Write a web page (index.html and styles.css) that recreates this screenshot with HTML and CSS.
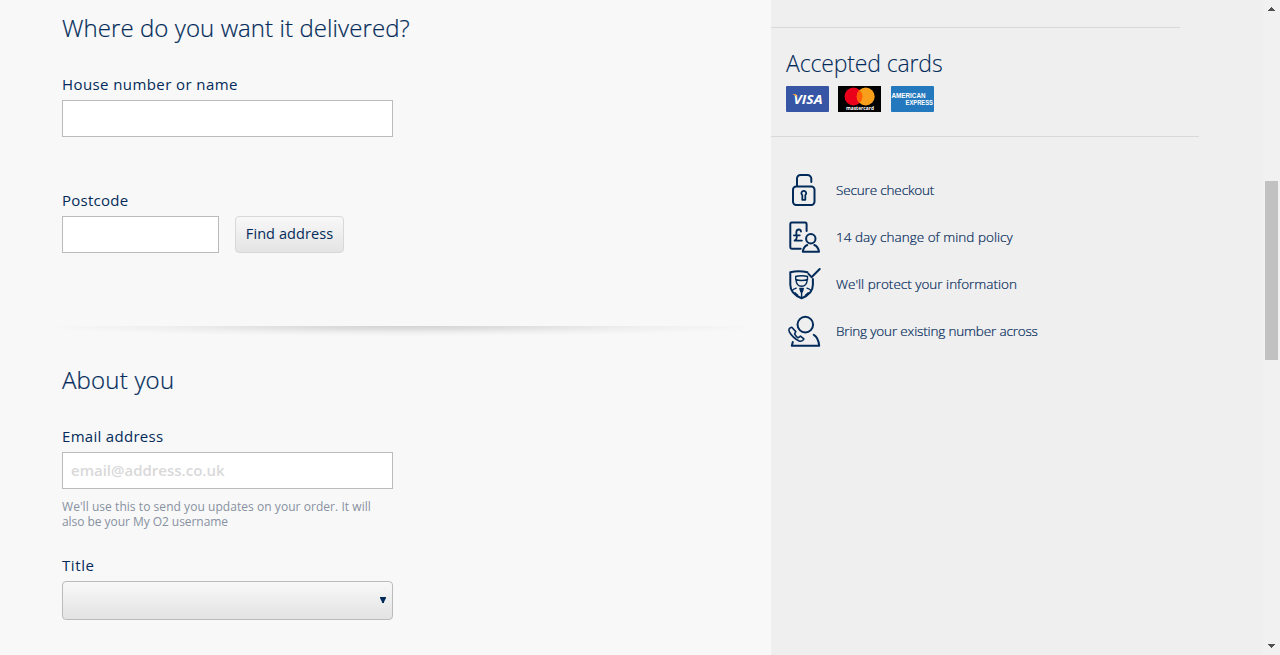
FILE: index.html
```html
<!DOCTYPE html>
<html lang="en">
<head>
<meta charset="utf-8">
<title>Delivery details</title>
<link rel="stylesheet" href="styles.css">
</head>
<body>
<div class="page">
  <main class="form">
    <h2 class="heading heading-delivery">Where do you want it delivered?</h2>
    <label class="label label-house" for="house">House number or name</label>
    <input class="field" id="house" type="text">
    <label class="label label-spaced label-postcode" for="postcode">Postcode</label>
    <div class="row">
      <input class="field field-short" id="postcode" type="text">
      <button class="button" type="button">Find address</button>
    </div>
    <div class="divider"></div>
    <h2 class="heading heading-about">About you</h2>
    <label class="label label-email" for="email">Email address</label>
    <input class="field" id="email" type="email" placeholder="email@address.co.uk">
    <p class="help"><span class="help-first">We'll use this to send you updates on your order. It will</span><br><span class="help-second">also be your My O2 username</span></p>
    <label class="label label-title">Title</label>
    <div class="select">
      <svg width="6" height="6" viewBox="0 0 6 6"><path d="M0 0h6v1L4 5v1H2V5L0 1z" fill="#032b5a"/></svg>
    </div>
  </main>
  <aside class="side">
    <div class="rule rule-top"></div>
    <h3 class="side-heading">Accepted cards</h3>
    <div class="cards">
      <svg width="43" height="26" viewBox="0 0 43 26"><rect width="43" height="26" rx="1" fill="#3655a5"/><text x="7.500" y="18" class="visa" textLength="29" lengthAdjust="spacingAndGlyphs">VISA</text><path d="M5.800 8h4.200l1 4C9.900 9.900 8.400 8.700 5.800 8z" fill="#f7a12b"/></svg>
      <svg class="card-mc" width="43" height="26" viewBox="0 0 43 26"><rect width="43" height="26" fill="#000"/><circle cx="15.500" cy="10.500" r="9" fill="#eb001b"/><circle cx="27.700" cy="10.500" r="9" fill="#f79e1b"/><path d="M21.600 3.900a9 9 0 0 1 0 13.200a9 9 0 0 1 0-13.200z" fill="#ff5f00"/><text x="8" y="23.600" class="mc" textLength="28" lengthAdjust="spacingAndGlyphs">mastercard</text></svg>
      <svg class="card-amex" width="43" height="26" viewBox="0 0 43 26"><rect width="43" height="26" rx="1" fill="#2478bd"/><text x="0.500" y="12" class="amex" textLength="34" lengthAdjust="spacingAndGlyphs">AMERICAN</text><text x="14.500" y="18.800" class="amex" textLength="27.500" lengthAdjust="spacingAndGlyphs">EXPRESS</text></svg>
    </div>
    <div class="rule rule-wide"></div>
    <ul class="perks">
      <li class="perk">
        <svg class="icon" width="34" height="34" viewBox="0 0 34 34"><path d="M10 12.500V5.500a3.500 3.500 0 0 1 3.500-3.500h7a3.800 3.800 0 0 1 3.800 3.800V9"/><rect x="6" y="13.600" width="21.500" height="18.400" rx="3.200"/><path stroke-width="1.800" d="M15.300 22.100a2.400 2.400 0 1 1 3 0v4.700h-3z"/></svg>
        <span class="perk-text p1">Secure checkout</span>
      </li>
      <li class="perk">
        <svg class="icon" width="34" height="34" viewBox="0 0 34 34"><path d="M19.600 11V4a1.400 1.400 0 0 0-1.400-1.400H4.700A1.400 1.400 0 0 0 3.300 4v23.300a1.400 1.400 0 0 0 1.400 1.400h9"/><path stroke-width="1.800" d="M14 11.500c-.2-1.300-1-2-2.100-2-1.700 0-2.600 1.300-2.600 3.200 0 2.500.5 3 .5 4.500 0 1.700-.7 2.700-2.200 3.400h7.300M6.900 15.300h5.900"/><circle cx="23.800" cy="18.800" r="4.700"/><path d="M20.300 25c-2.800 1.100-3.900 3-4.500 6.700h16.200c-.6-3.700-1.900-5.600-4.700-6.700"/></svg>
        <span class="perk-text p2">14 day change of mind policy</span>
      </li>
      <li class="perk">
        <svg class="icon icon-shield" width="34" height="34" viewBox="0 0 34 34"><path d="M20.500 6.200c-6.300-1.500-11.300-1.500-17.200 0v12.500c0 6.700 4.500 10.800 11.300 13.500 6.900-2.700 11.300-6.800 11.300-13.500V13"/><path d="M21.500 7.800l3 3.400 8.200-8.200"/><g stroke-width="1.400"><path d="M8.700 10.500c2.500-1.100 9.300-1.100 11.800 0v3c-3.700 1.300-8.100 1.300-11.800 0zM9 14c.3 4.500 2.100 6.200 5.600 6.200s5.300-1.700 5.600-6.200M9.200 22.200c-1.900.6-3.300 1.300-4.300 2.500M20 22.200c1.900.6 3.300 1.300 4.300 2.500M8 26.700c.8.900 1.700 1.700 2.700 2.400M21.200 26.700c-.8.900-1.700 1.700-2.700 2.400M14.600 24.500v7"/><path d="M12.900 22.500h3.400l-1 3.300h-1.400z" fill="#032b5a"/></g></svg>
        <span class="perk-text p3">We'll protect your information</span>
      </li>
      <li class="perk">
        <svg class="icon" width="34" height="34" viewBox="0 0 34 34"><circle cx="18.300" cy="10.600" r="7.800"/><path d="M5.800 28l-1 3.700h27.400c-.6-5.700-1.900-9-5.400-10.900"/><path stroke-width="1.600" d="M4.800 13.200C2.200 13.800 1.200 15.600 2.400 18c2.300 4 5.500 6.900 9.800 9 2 .7 3.700-.1 4.700-2.100l-3.500-2.800-2.300 1.700c-1.500-1-2.700-2.400-3.500-4l1.200-2.200z"/></svg>
        <span class="perk-text p4">Bring your existing number across</span>
      </li>
    </ul>
  </aside>
  <div class="scrollbar">
    <svg width="7" height="4" viewBox="0 0 7 4"><path d="M3 0h1v1h1v1h1v1h1v1H0V3h1V2h1V1h1z" fill="#505050"/></svg>
    <div class="thumb"></div>
    <svg class="arrow-down" width="7" height="4" viewBox="0 0 7 4"><path d="M0 0h7v1H6v1H5v1H4v1H3V3H2V2H1V1H0z" fill="#505050"/></svg>
  </div>
</div>
</body>
</html>
```
FILE: styles.css
```css
* { box-sizing: border-box; }
body { margin: 0; font-family: "Open Sans", "Noto Sans", sans-serif; color: #032b5a; overflow: hidden; }
.page { display: flex; height: 655px; background: #efefef; }
.form { width: 771px; padding: 8px 0 0 62px; background: #f8f8f8; display: flex; flex-direction: column; align-items: flex-start; }
.heading { margin: 0; font-size: 24px; line-height: 40px; font-weight: 300; white-space: nowrap; -webkit-text-stroke: 0.2px #032b5a; }
.heading-delivery { letter-spacing: 0.08px; }
.heading-about { letter-spacing: 0.2px; }
.label { margin-top: 26px; font-size: 15px; line-height: 20px; white-space: nowrap; }
.label-house { letter-spacing: 0.41px; }
.label-postcode { letter-spacing: 0.25px; }
.label-email { letter-spacing: 0.3px; }
.label-title { letter-spacing: 0.6px; }
.label-spaced { margin-top: 53px; }
.field { margin: 6px 0 0; width: 331px; height: 37px; padding: 0 8px 2px; border: 1px solid #bbb; border-radius: 0; background: #fff; font: 15px "Open Sans", sans-serif; outline: 0; }
.field::placeholder { color: #d9d9d9; opacity: 1; font-weight: 600; }
.field-short { width: 157px; }
.row { display: flex; gap: 16px; }
.button { margin-top: 6px; width: 109px; height: 37px; padding: 0 0 2px; border: 1px solid #d8d8d8; border-radius: 4px; background: linear-gradient(#f8f8f8, #e4e4e4); color: #032b5a; font: 14.5px "Open Sans", sans-serif; letter-spacing: 0.08px; white-space: nowrap; }
.divider { width: 690px; height: 12px; margin: 73px 0 22px -4px; background: radial-gradient(ellipse 53% 85% at 50% 0, #d3d3d3 0%, #dedede 30%, #efefef 65%, #f8f8f8 100%); }
.help { margin: 10px 0 0; font-size: 12px; line-height: 15px; color: #8791a1; white-space: nowrap; }
.help-first { letter-spacing: 0.05px; }
.help-second { letter-spacing: -0.05px; }
.select { margin-top: 6px; width: 331px; height: 39px; padding: 0 6px 1px 0; border: 1px solid #bbb; border-radius: 4px; background: linear-gradient(#f8f8f8, #e3e3e3); display: flex; align-items: center; justify-content: flex-end; }
.side { width: 492px; padding-top: 27px; }
.rule { height: 1px; background: #d8d8d8; }
.rule-top { width: 409px; }
.rule-wide { width: 428px; margin-top: 24px; }
.side-heading { margin: 15px 0 0 15px; font-size: 23px; line-height: 40px; font-weight: 300; letter-spacing: -0.14px; white-space: nowrap; -webkit-text-stroke: 0.1px #032b5a; }
.cards { display: flex; padding-left: 15px; margin-top: 3px; height: 26px; }
.card-mc { margin-left: 9px; }
.card-amex { margin-left: 10px; }
.visa { font: italic bold 13px "Open Sans", sans-serif; fill: #fff; }
.mc { font: bold 5.5px "Open Sans", sans-serif; fill: #fff; }
.amex { font: bold 6.5px "Liberation Sans", sans-serif; fill: #fff; }
.perks { list-style: none; margin: 29px 0 0; padding: 0 0 0 16px; }
.perk { display: flex; align-items: center; height: 47px; }
.icon { fill: none; stroke: #032b5a; stroke-width: 2; stroke-linejoin: round; stroke-linecap: round; }
.icon-shield { margin-bottom: 2px; }
.perk-text { margin-left: 15px; font-size: 13.5px; line-height: 20px; font-weight: 300; white-space: nowrap; -webkit-text-stroke: 0.2px #032b5a; }
.p1 { letter-spacing: -0.15px; }
.p2 { letter-spacing: 0.03px; }
.p4 { letter-spacing: -0.16px; }
.scrollbar { width: 17px; padding: 7px 0 7px 2px; background: #f1f1f1; display: flex; flex-direction: column; }
.scrollbar svg { margin-left: 3px; }
.thumb { width: 13px; height: 179px; margin-top: 170px; background: #c1c1c1; }
.arrow-down { margin-top: auto; }
```
